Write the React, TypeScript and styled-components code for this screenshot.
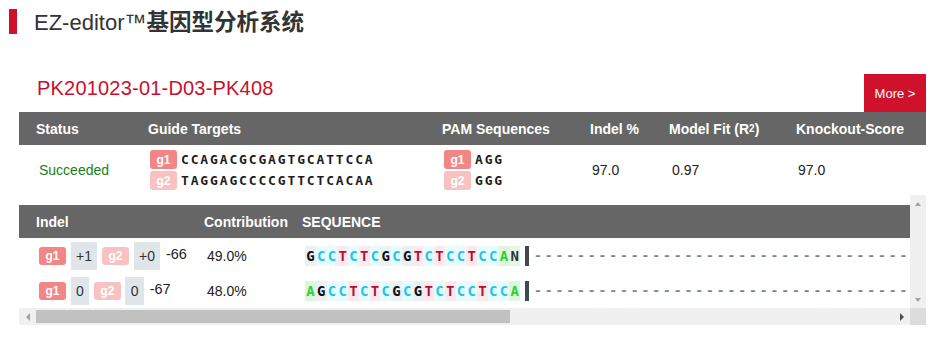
import React from "react";
import styled, { createGlobalStyle } from "styled-components";

const GlobalStyle = createGlobalStyle`
  html, body { margin: 0; padding: 0; background: #fff; }
  body { font-family: "Liberation Sans", Arial, "Noto Sans CJK SC", sans-serif; color: #333; }
  * { box-sizing: border-box; }
`;

const Page = styled.div`
  width: 941px;
  height: 339px;
  overflow: hidden;
  padding-top: 9px;
`;

const TitleRow = styled.div`
  display: flex;
  align-items: center;
  height: 25px;
  padding-left: 9px;
`;

const TitleBar = styled.span`
  flex: none;
  width: 8px;
  height: 25px;
  background: #d0112b;
`;

const TitleText = styled.h1`
  margin: 0 0 0 17px;
  font-family: "Liberation Sans", "Noto Sans CJK SC", sans-serif;
  font-size: 22px;
  font-weight: 400;
  line-height: 25px;
  color: #333;
  white-space: nowrap;
`;

const TitleCjk = styled.span`
  font-family: "Noto Sans CJK SC", sans-serif;
  font-size: 22.5px;
  font-weight: 700;
`;

const Sample = styled.section`
  margin: 40px 15px 0 19px;
`;

const SampleHead = styled.div`
  display: flex;
  justify-content: space-between;
  height: 38px;
`;

const SampleName = styled.h2`
  margin: 0;
  padding: 2px 0 0 18px;
  font-size: 20px;
  font-weight: 400;
  letter-spacing: 0.2px;
  line-height: 24px;
  color: #c8102e;
`;

const MoreButton = styled.button`
  width: 62px;
  height: 38px;
  padding: 0;
  border: 0;
  background: #d0112b;
  color: #fff;
  font-family: "Liberation Sans", Arial, sans-serif;
  font-size: 13px;
  cursor: pointer;
`;

const SummaryGrid = styled.div`
  display: grid;
  grid-template-columns: 112px 294px 148px 79px 127px 1fr;
`;

const HeadCell = styled.div<{ $pad: number }>`
  display: flex;
  align-items: center;
  height: 33px;
  padding-left: ${(p) => p.$pad}px;
  background: #666;
  color: #fff;
  font-size: 14px;
  font-weight: 700;
  white-space: nowrap;
`;

const Sup = styled.sup`
  font-size: 10px;
  line-height: 0;
  vertical-align: 7px;
`;

const DataCell = styled.div<{ $pad: number }>`
  display: flex;
  align-items: center;
  height: 50px;
  padding-left: ${(p) => p.$pad}px;
  font-size: 14px;
  color: #222;
`;

const Status = styled.span`
  color: #17801a;
`;

const GuideList = styled.div`
  display: flex;
  flex-direction: column;
  gap: 2px;
`;

const GuideLine = styled.div`
  display: flex;
  align-items: center;
  gap: 4px;
`;

const Tag = styled.span<{ $light?: boolean; $h?: number }>`
  display: inline-flex;
  align-items: center;
  justify-content: center;
  flex: none;
  height: ${(p) => p.$h ?? 18}px;
  padding: 0 6.5px;
  border-radius: 3px;
  background: ${(p) => (p.$light ? "#f9c2c2" : "#f28585")};
  color: #fff;
  font-size: 12px;
  font-weight: 700;
`;

const GuideSeq = styled.span`
  font-family: "DejaVu Sans Mono", "Liberation Mono", monospace;
  font-size: 13px;
  font-weight: 700;
  letter-spacing: 1.85px;
  color: #1d1d1d;
`;

const ScrollFrame = styled.div`
  display: grid;
  grid-template-columns: 891px 16px;
  grid-template-rows: 113px 17px;
`;

const Viewport = styled.div`
  overflow: hidden;
`;

const Inner = styled.div`
  width: 1611px;
  padding-top: 10px;
`;

const DetailGrid = styled.div`
  display: grid;
  grid-template-columns: 177px 98px 1fr;
`;

const DetailCell = styled.div<{ $pad: number }>`
  display: flex;
  align-items: center;
  height: 35px;
  padding-left: ${(p) => p.$pad}px;
  font-size: 14px;
  color: #222;
  white-space: nowrap;
`;

const IndelGroup = styled.div`
  display: flex;
  align-items: center;
  gap: 4.5px;
`;

const Shift = styled.span`
  display: inline-flex;
  align-items: center;
  height: 28px;
  padding: 0 5.5px;
  background: #dfe6ea;
  color: #333;
  font-size: 14px;
`;

const Net = styled.span`
  margin-left: 1px;
  padding-bottom: 3px;
  color: #222;
  font-size: 14.5px;
`;

const SeqRow = styled.div`
  display: flex;
  align-items: center;
  font-family: "DejaVu Sans Mono", "Liberation Mono", monospace;
  font-size: 14px;
  font-weight: 700;
`;

const baseStyle: Record<string, { fg: string; bg: string }> = {
  G: { fg: "#111", bg: "#eaf0f3" },
  C: { fg: "#1ec6ec", bg: "#e8fbff" },
  T: { fg: "#b0103a", bg: "#fde9ec" },
  A: { fg: "#2ecf38", bg: "#dcf7dc" },
  N: { fg: "#2a3540", bg: "#e3f7e3" },
};

const Base = styled.span<{ $b: string }>`
  display: inline-block;
  width: 10.75px;
  height: 20px;
  line-height: 20px;
  text-align: center;
  color: ${(p) => baseStyle[p.$b].fg};
  background: ${(p) => baseStyle[p.$b].bg};
`;

const CutBar = styled.span`
  flex: none;
  width: 4px;
  height: 20px;
  margin: 0 5px;
  background: #3f4a50;
`;

const Gap = styled.span`
  font-size: 13px;
  color: #76868c;
  letter-spacing: 2.92px;
  white-space: nowrap;
`;

const VBar = styled.div`
  display: flex;
  flex-direction: column;
  justify-content: space-between;
  background: #f0f0f0;
`;

const HBar = styled.div`
  display: flex;
  background: #f0f0f0;
`;

const Corner = styled.div`
  background: #dcdcdc;
`;

const ScrollBtn = styled.div<{ $w: number; $h: number }>`
  display: flex;
  align-items: center;
  justify-content: center;
  flex: none;
  width: ${(p) => p.$w}px;
  height: ${(p) => p.$h}px;
`;

const Arrow = styled.span<{ $dir: "up" | "down" | "left" | "right"; $dark?: boolean }>`
  width: 0;
  height: 0;
  border: 4px solid transparent;
  ${(p) => {
    const c = p.$dark ? "#505050" : "#a3a3a3";
    switch (p.$dir) {
      case "up":
        return `border-top-width:0; border-bottom: 4px solid ${c}; border-left-width:3.5px; border-right-width:3.5px;`;
      case "down":
        return `border-bottom-width:0; border-top: 4px solid ${c}; border-left-width:3.5px; border-right-width:3.5px;`;
      case "left":
        return `border-left-width:0; border-right: 4px solid ${c};`;
      default:
        return `border-right-width:0; border-left: 4px solid ${c};`;
    }
  }}
`;

const Track = styled.div`
  flex: 1;
  padding: 2px 0;
`;

const Thumb = styled.div`
  height: 13px;
  background: #c1c1c1;
`;

const guides = [
  { tag: "g1", seq: "CCAGACGCGAGTGCATTCCA", pam: "AGG", light: false },
  { tag: "g2", seq: "TAGGAGCCCCGTTCTCACAA", pam: "GGG", light: true },
];

const rows = [
  { g1: "+1", g2: "+0", net: "-66", contrib: "49.0%", seq: "GCCTCTCGCGTCTCCTCCAN" },
  { g1: "0", g2: "0", net: "-67", contrib: "48.0%", seq: "AGCCTCTCGCGTCTCCTCCA" },
];

const dashes = "-".repeat(35);

export default function App() {
  return (
    <>
      <GlobalStyle />
      <Page>
        <TitleRow>
          <TitleBar />
          <TitleText>
            EZ-editor™<TitleCjk>基因型分析系统</TitleCjk>
          </TitleText>
        </TitleRow>
        <Sample>
          <SampleHead>
            <SampleName>PK201023-01-D03-PK408</SampleName>
            <MoreButton>More &gt;</MoreButton>
          </SampleHead>
          <SummaryGrid>
            <HeadCell $pad={17}>Status</HeadCell>
            <HeadCell $pad={17}>Guide Targets</HeadCell>
            <HeadCell $pad={17}>PAM Sequences</HeadCell>
            <HeadCell $pad={17}>Indel %</HeadCell>
            <HeadCell $pad={17}>
              Model Fit (R<Sup>2</Sup>)
            </HeadCell>
            <HeadCell $pad={17}>Knockout-Score</HeadCell>

            <DataCell $pad={20}>
              <Status>Succeeded</Status>
            </DataCell>
            <DataCell $pad={19}>
              <GuideList>
                {guides.map((g) => (
                  <GuideLine key={g.tag}>
                    <Tag $light={g.light} $h={19}>{g.tag}</Tag>
                    <GuideSeq>{g.seq}</GuideSeq>
                  </GuideLine>
                ))}
              </GuideList>
            </DataCell>
            <DataCell $pad={19}>
              <GuideList>
                {guides.map((g) => (
                  <GuideLine key={g.tag}>
                    <Tag $light={g.light} $h={19}>{g.tag}</Tag>
                    <GuideSeq>{g.pam}</GuideSeq>
                  </GuideLine>
                ))}
              </GuideList>
            </DataCell>
            <DataCell $pad={19}>97.0</DataCell>
            <DataCell $pad={20}>0.97</DataCell>
            <DataCell $pad={19}>97.0</DataCell>
          </SummaryGrid>

          <ScrollFrame>
            <Viewport>
              <Inner>
                <DetailGrid>
                  <HeadCell $pad={17}>Indel</HeadCell>
                  <HeadCell $pad={8}>Contribution</HeadCell>
                  <HeadCell $pad={8}>SEQUENCE</HeadCell>
                  {rows.map((r) => (
                    <React.Fragment key={r.net}>
                      <DetailCell $pad={20}>
                        <IndelGroup>
                          <Tag>g1</Tag>
                          <Shift>{r.g1}</Shift>
                          <Tag $light>g2</Tag>
                          <Shift>{r.g2}</Shift>
                          <Net>{r.net}</Net>
                        </IndelGroup>
                      </DetailCell>
                      <DetailCell $pad={11}>{r.contrib}</DetailCell>
                      <DetailCell $pad={11}>
                        <SeqRow>
                          {r.seq.split("").map((b, i) => (
                            <Base key={i} $b={b}>
                              {b}
                            </Base>
                          ))}
                          <CutBar />
                          <Gap>{dashes}</Gap>
                        </SeqRow>
                      </DetailCell>
                    </React.Fragment>
                  ))}
                </DetailGrid>
              </Inner>
            </Viewport>
            <VBar>
              <ScrollBtn $w={16} $h={17}>
                <Arrow $dir="up" />
              </ScrollBtn>
              <ScrollBtn $w={16} $h={17}>
                <Arrow $dir="down" />
              </ScrollBtn>
            </VBar>
            <HBar>
              <ScrollBtn $w={17} $h={17}>
                <Arrow $dir="left" />
              </ScrollBtn>
              <Track>
                <Thumb style={{ width: `${(891 / 1611) * 100}%` }} />
              </Track>
              <ScrollBtn $w={17} $h={17}>
                <Arrow $dir="right" $dark />
              </ScrollBtn>
            </HBar>
            <Corner />
          </ScrollFrame>
        </Sample>
      </Page>
    </>
  );
}
